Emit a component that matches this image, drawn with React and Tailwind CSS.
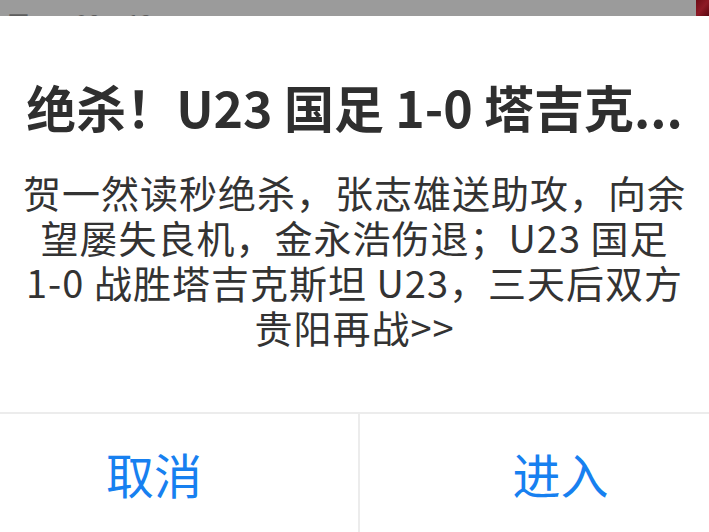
const font = { fontFamily: '"Noto Sans CJK SC", "Noto Sans", sans-serif' };

export default function App() {
  const lines = [
    "贺一然读秒绝杀，张志雄送助攻，向余",
    "望屡失良机，金永浩伤退；U23 国足",
    "1-0 战胜塔吉克斯坦 U23，三天后双方",
    "贵阳再战>>",
  ];

  return (
    <div className="w-[709px] h-[532px] bg-white flex flex-col overflow-hidden" style={font}>
      {/* background strip behind the alert */}
      <div className="h-[16px] bg-[#9b9b9b] flex justify-between overflow-hidden">
        <div className="pt-[11px] ml-[-16px] text-[23px] leading-none text-[#5e5e5e] whitespace-nowrap">
          <span className="mr-[45px]">昨天</span>
          <span>08</span>
          <span className="mx-[10px]">:</span>
          <span>12</span>
        </div>
        <div className="w-[13px] h-full bg-gradient-to-br from-[#6e0c16] via-[#8e1a26] to-[#5a0810]" />
      </div>

      {/* alert */}
      <div className="flex-1 flex flex-col">
        <div className="pt-[62px] text-center text-[50px] leading-[56px] font-bold text-[#2f2f2f] whitespace-nowrap">
          绝杀！U23 国足 1-0 塔吉克...
        </div>
        <div className="pt-[35px] flex flex-col items-center text-[38px] leading-[45px] text-[#333333] tracking-[1px]">
          {lines.map((l) => (
            <div key={l} className="whitespace-nowrap">{l}</div>
          ))}
        </div>
        <div className="mt-auto h-[120px] border-t-2 border-[#ececec] flex">
          <div className="w-[358px] pr-[50px] flex items-center justify-center text-[48px] text-[#1780f0]">
            取消
          </div>
          <div className="flex-1 border-l-2 border-[#ececec] pl-[52px] flex items-center justify-center text-[48px] text-[#1780f0]">
            进入
          </div>
        </div>
      </div>
    </div>
  );
}
